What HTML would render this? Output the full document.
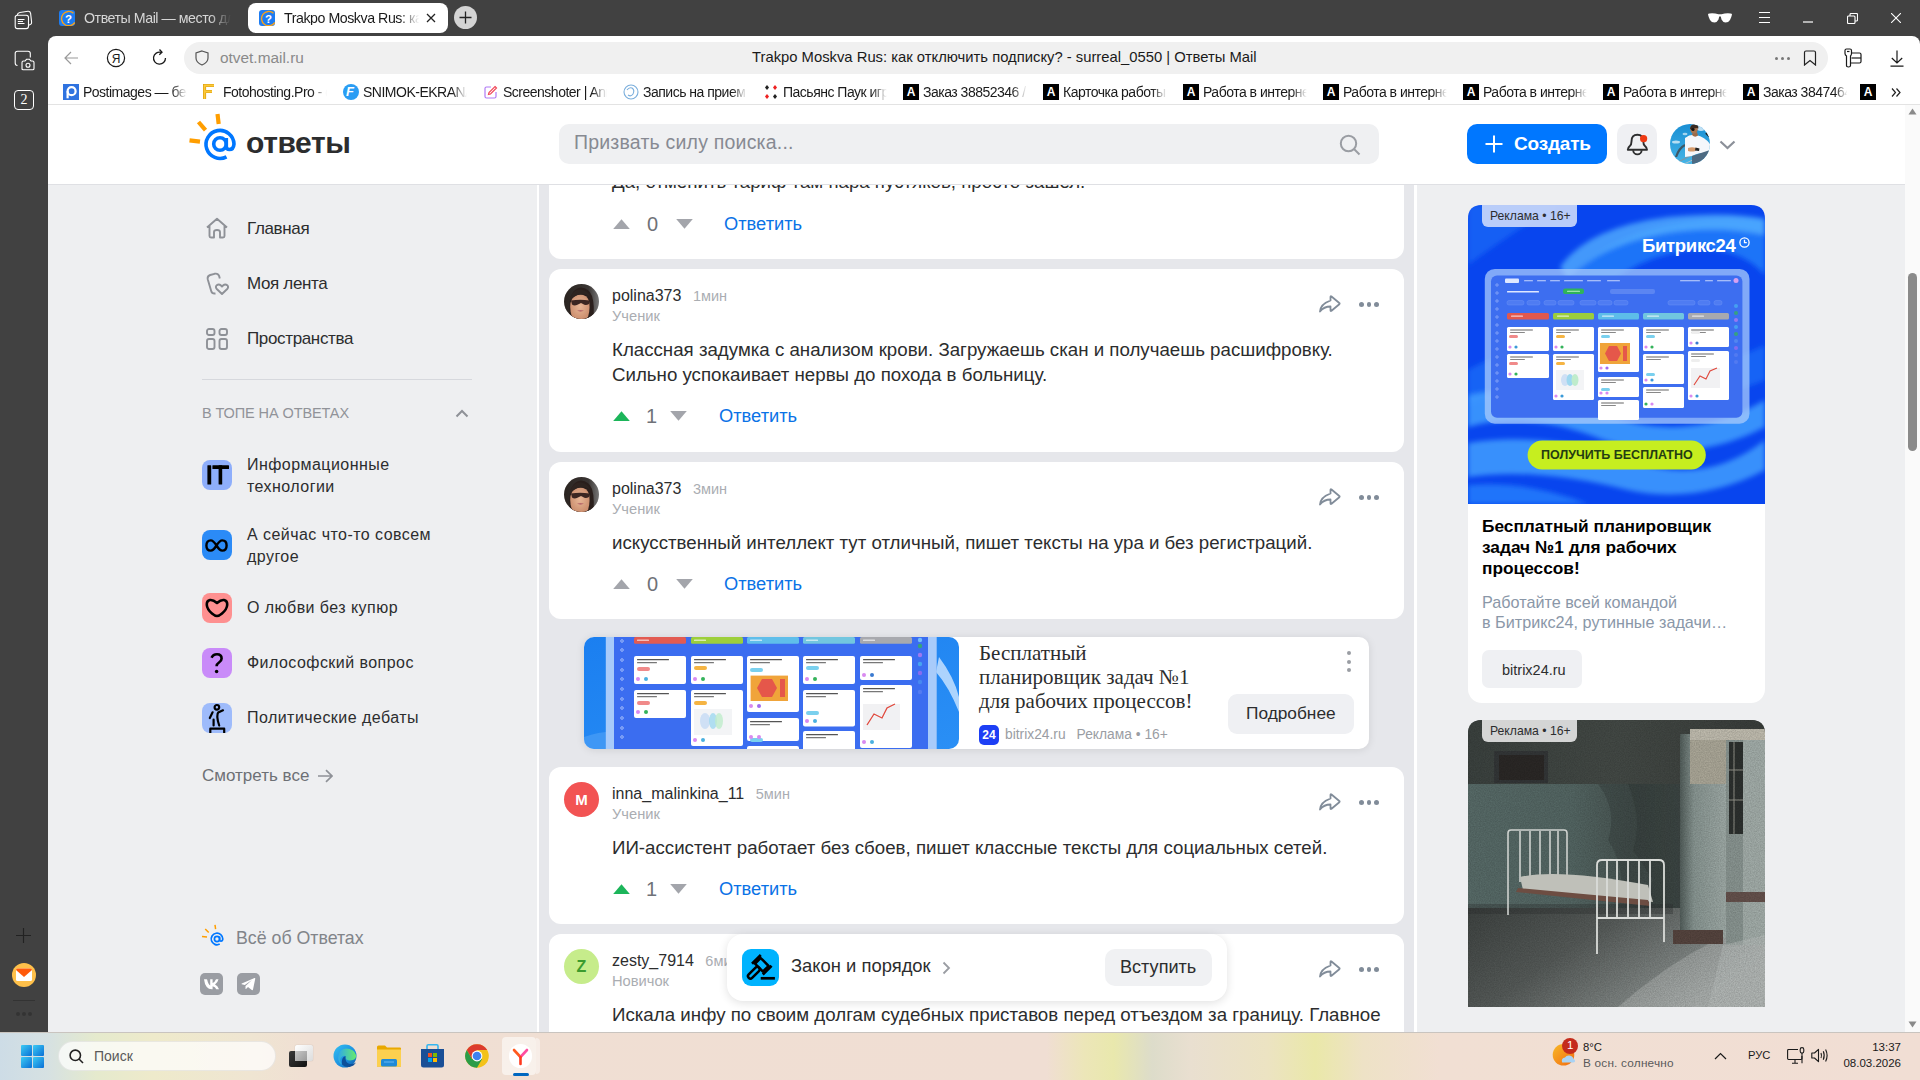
<!DOCTYPE html>
<html><head><meta charset="utf-8">
<style>
*{margin:0;padding:0;box-sizing:border-box}
html,body{width:1920px;height:1080px;overflow:hidden}
body{position:relative;background:#414141;font-family:"Liberation Sans",sans-serif;color:#2c2d2e}
.a{position:absolute}
.t{position:absolute;white-space:nowrap;line-height:1}
svg{display:block}
/* tabs */
.tabtxt{font-size:14.2px;color:#d6d6d6;letter-spacing:-0.45px}
.bm{position:absolute;top:83px;height:18px;font-size:14px;color:#1a1a1a;white-space:nowrap;line-height:18px;overflow:hidden;letter-spacing:-0.5px}
.bmA{position:absolute;top:84px;width:16px;height:16px;background:#000;color:#fff;font-weight:bold;font-size:12px;text-align:center;line-height:16px}
.fade{-webkit-mask-image:linear-gradient(90deg,#000 84%,transparent 98%)}
/* page */
.nav{font-size:17px;color:#2c2d2e;letter-spacing:-0.35px}
.topic{font-size:16px;color:#2c2d2e;line-height:22px;white-space:normal;letter-spacing:0.45px}
.ticon{position:absolute;left:202px;width:30px;height:30px;border-radius:8px}
.card{position:absolute;left:549px;width:855px;background:#fff;border-radius:12px}
.uname{font-size:16px;color:#2c2d2e}
.utime{font-size:14.5px;color:#aaadb2}
.urank{font-size:14.7px;color:#aaadb2}
.body{font-size:18.7px;color:#2c2d2e;line-height:24.5px}
.reply{font-size:18.3px;color:#0a72e6}
.cnt{font-size:20px;color:#6f7278}
</style></head><body>

<!-- ========== TAB STRIP ========== -->
<!-- sidebar icons -->
<svg class="a" style="left:14px;top:10px" width="20" height="20" viewBox="0 0 20 20" fill="none" stroke="#fff" stroke-width="1.1"><rect x="1.2" y="5.3" width="13.3" height="13.3" rx="2.3"/><path d="M3.2 5.2 Q3.6 2.8 5.8 2.5 L14 1.3 Q16.2 1.1 16.6 3.3 L17.6 12.2 Q17.8 14 16.3 14.6 L14.6 15.2"/><path d="M3.8 9.5H10.5M3.8 11.5H9M3.8 13.5H10.5"/></svg>
<svg class="a" style="left:14px;top:50px" width="21" height="21" viewBox="0 0 21 21" fill="none" stroke="#fff" stroke-width="1.1"><path d="M3.5 15.5 Q1.2 15.3 1.2 13 V3.5 Q1.2 1.2 3.5 1.2 H14 Q16.3 1.2 16.3 3.5 V7.5"/><path d="M8 19.5 V12.5 Q8 11 9.5 11 H11 L12.5 9.3 H15.5 L17 11 H18.5 Q20 11 20 12.5 V18.5 Q20 19.8 18.7 19.8 H9.3 Q8 19.8 8 18.5Z"/><circle cx="14" cy="15.2" r="2"/></svg>
<div class="a" style="left:14px;top:90px;width:20px;height:20px;border:1.1px solid #fff;border-radius:4px;color:#fff;font-size:14px;font-family:'Liberation Serif',serif;text-align:center;line-height:18px">2</div>
<svg class="a" style="left:16px;top:928px" width="15" height="15" viewBox="0 0 15 15" stroke="#222" stroke-width="1.1"><path d="M7.5 0v15M0 7.5h15"/></svg>
<div class="a" style="left:12px;top:963px;width:24px;height:24px;border-radius:12px;background:#fec04a"></div>
<svg class="a" style="left:15px;top:968px" width="18" height="14" viewBox="0 0 18 14"><path d="M1 2 Q1 0.5 2.5 0.5 H15.5 Q17 0.5 17 2 V11.5 Q17 13 15.5 13 H2.5 Q1 13 1 11.5Z" fill="#fff"/><path d="M1 2 Q1 0.5 2.5 0.5 H15.5 Q17 0.5 17 2 L9 9 Z" fill="#ff5a0a"/></svg>
<div class="a" style="left:13px;top:1000px;width:22px;height:1px;background:#333"></div>
<div class="a" style="left:16px;top:1012px;width:4px;height:4px;border-radius:2px;background:#333"></div>
<div class="a" style="left:22px;top:1012px;width:4px;height:4px;border-radius:2px;background:#333"></div>
<div class="a" style="left:28px;top:1012px;width:4px;height:4px;border-radius:2px;background:#333"></div>

<!-- tab 1 -->
<div class="a" style="left:59px;top:10px;width:16px;height:16px;border-radius:3px;background:#1d7cf2"></div>
<svg class="a" style="left:59px;top:10px" width="16" height="16" viewBox="0 0 16 16"><path d="M14.5 3.2 A7.2 7.2 0 1 0 15.8 12.5" fill="none" stroke="#f7a21b" stroke-width="1.4"/><text x="9.5" y="12.8" font-size="11.5" font-weight="bold" fill="#fff" text-anchor="middle" font-family="Liberation Sans">?</text></svg>
<div class="t tabtxt fade" style="left:84px;top:11px;width:150px;">Ответы Mail — место для</div>
<!-- tab 2 active -->
<div class="a" style="left:248px;top:3px;width:200px;height:30px;background:#fff;border-radius:8px"></div>
<div class="a" style="left:259px;top:10px;width:16px;height:16px;border-radius:3px;background:#1d7cf2"></div>
<svg class="a" style="left:259px;top:10px" width="16" height="16" viewBox="0 0 16 16"><path d="M14.5 3.2 A7.2 7.2 0 1 0 15.8 12.5" fill="none" stroke="#f7a21b" stroke-width="1.4"/><text x="9.5" y="12.8" font-size="11.5" font-weight="bold" fill="#fff" text-anchor="middle" font-family="Liberation Sans">?</text></svg>
<div class="t fade" style="left:284px;top:11px;width:138px;font-size:14.2px;letter-spacing:-0.45px;color:#1a1a1a;overflow:hidden">Trakpo Moskva Rus: как</div>
<svg class="a" style="left:426px;top:13px" width="10" height="10" viewBox="0 0 10 10" stroke="#222" stroke-width="1.3"><path d="M1 1L9 9M9 1L1 9"/></svg>
<div class="a" style="left:454px;top:6px;width:23px;height:23px;border-radius:12px;background:#d4d4d4"></div>
<svg class="a" style="left:459px;top:11px" width="13" height="13" viewBox="0 0 13 13" stroke="#222" stroke-width="1.3"><path d="M6.5 0.5v12M0.5 6.5h12"/></svg>

<!-- window controls -->
<svg class="a" style="left:1708px;top:13px" width="24" height="10" viewBox="0 0 24 10" fill="#fff"><path d="M0 1.5 Q0 0.5 1.5 0.5 Q6 0 10.5 1.2 H13.5 Q18 0 22.5 0.5 Q24 0.5 24 1.5 Q23.5 4 22 7 Q20.5 9.5 17.5 9.5 Q15 9.5 13.5 6.5 L12.8 3.5 H11.2 L10.5 6.5 Q9 9.5 6.5 9.5 Q3.5 9.5 2 7 Q0.5 4 0 1.5Z"/></svg>
<svg class="a" style="left:1759px;top:12px" width="11" height="11" viewBox="0 0 11 11" stroke="#fff" stroke-width="1"><path d="M0 0.5h11M0 5.5h11M0 10.5h11"/></svg>
<svg class="a" style="left:1803px;top:21px" width="10" height="2" viewBox="0 0 10 2" stroke="#fff" stroke-width="1.2"><path d="M0 1h10"/></svg>
<svg class="a" style="left:1847px;top:13px" width="11" height="11" viewBox="0 0 11 11" fill="none" stroke="#fff" stroke-width="1.1"><rect x="0.5" y="3" width="7.5" height="7.5" rx="1"/><path d="M3 3V1.5Q3 0.5 4 0.5H9.5Q10.5 0.5 10.5 1.5V7Q10.5 8 9.5 8H8"/></svg>
<svg class="a" style="left:1891px;top:13px" width="10" height="10" viewBox="0 0 10 10" stroke="#fff" stroke-width="1.1"><path d="M0 0L10 10M10 0L0 10"/></svg>

<!-- ========== BROWSER CHROME ========== -->
<div class="a" style="left:48px;top:36px;width:1872px;height:69px;background:#fff;border-radius:8px 8px 0 0;border-bottom:1px solid #e3e3e3"></div>
<svg class="a" style="left:64px;top:51px" width="15" height="14" viewBox="0 0 15 14" fill="none" stroke="#9a9a9a" stroke-width="1.2"><path d="M14 7H1M7 1L1 7L7 13"/></svg>
<svg class="a" style="left:106px;top:48px" width="20" height="20" viewBox="0 0 20 20" fill="none" stroke="#1a1a1a" stroke-width="1.2"><circle cx="10" cy="10" r="8.6"/><text x="10" y="14.5" font-size="12" fill="#1a1a1a" stroke="none" text-anchor="middle" font-family="Liberation Sans">Я</text></svg>
<svg class="a" style="left:152px;top:48px" width="16" height="18" viewBox="0 0 16 18" fill="none" stroke="#1a1a1a" stroke-width="1.3"><path d="M13.5 10 A6 6 0 1 1 9 4.3"/><path d="M7.5 1.5 L10 4.3 L7.3 6.8"/></svg>
<div class="a" style="left:184px;top:42px;width:1644px;height:32px;background:#f0f0f0;border-radius:16px"></div>
<svg class="a" style="left:195px;top:50px" width="14" height="16" viewBox="0 0 14 16" fill="none" stroke="#555" stroke-width="1.2"><path d="M7 1 L13 3 V8 Q13 12.5 7 15 Q1 12.5 1 8 V3Z"/></svg>
<div class="t" style="left:220px;top:50px;font-size:15.4px;color:#8a8a8a">otvet.mail.ru</div>
<div class="t" style="left:752px;top:50px;font-size:14.8px;color:#1a1a1a">Trakpo Moskva Rus: как отключить подписку? - surreal_0550 | Ответы Mail</div>
<div class="a" style="left:1775px;top:57px;width:3px;height:3px;border-radius:2px;background:#777"></div>
<div class="a" style="left:1781px;top:57px;width:3px;height:3px;border-radius:2px;background:#777"></div>
<div class="a" style="left:1787px;top:57px;width:3px;height:3px;border-radius:2px;background:#777"></div>
<svg class="a" style="left:1803px;top:50px" width="14" height="16" viewBox="0 0 14 16" fill="none" stroke="#222" stroke-width="1.2"><path d="M1.5 15V2.5Q1.5 1 3 1H11Q12.5 1 12.5 2.5V15L7 10.5Z"/></svg>
<svg class="a" style="left:1843px;top:48px" width="19" height="20" viewBox="0 0 19 20" fill="none" stroke="#1a1a1a" stroke-width="1.2"><path d="M2 2.5Q2 1 3.5 1H7Q8.5 1 8.5 2.5V5.5Q8.5 7 7.5 8V17.5Q7.5 19 5.5 19Q3.5 19 3.5 17.5V8Q2 7 2 5.5Z"/><path d="M4 3.5H6.5"/><path d="M8.5 5H16.5Q18 5 18 6.5V13.5Q18 15 16.5 15H7.5"/><path d="M8.5 10H18"/></svg>
<svg class="a" style="left:1890px;top:50px" width="14" height="17" viewBox="0 0 14 17" fill="none" stroke="#1a1a1a" stroke-width="1.2"><path d="M7 0.5V13M1.8 8L7 13L12.2 8M0.5 16.2H13.5"/></svg>

<!-- bookmarks -->
<div class="a" style="left:63px;top:84px;width:16px;height:16px;background:#2f73e0"></div>
<svg class="a" style="left:63px;top:84px" width="16" height="16" viewBox="0 0 16 16" fill="none" stroke="#fff" stroke-width="2.2"><circle cx="8.6" cy="7.2" r="4"/><path d="M4.6 7.2V14.3"/></svg>
<div class="bm fade" style="left:83px;width:106px">Postimages — бесплатный</div>
<svg class="a" style="left:203px;top:84px" width="12" height="16" viewBox="0 0 12 16"><path d="M1.5 15V1.5H11M1.5 7.5H9" fill="none" stroke="#d89b0a" stroke-width="3.2"/><path d="M1.5 15V1.5H11M1.5 7.5H9" fill="none" stroke="#fcc93a" stroke-width="1.8"/></svg>
<div class="bm fade" style="left:223px;width:106px">Fotohosting.Pro - фото</div>
<div class="a" style="left:343px;top:84px;width:16px;height:16px;border-radius:8px;background:#2a9df4"></div>
<div class="t" style="left:346px;top:85px;font-size:13px;color:#fff;font-style:italic;font-weight:bold">F</div>
<div class="bm fade" style="left:363px;width:106px">SNIMOK-EKRANA.ru</div>
<svg class="a" style="left:484px;top:85px" width="14" height="14" viewBox="0 0 14 14" fill="none" stroke-width="1.2"><path d="M7 2H2.5Q1 2 1 3.5V11.5Q1 13 2.5 13H10.5Q12 13 12 11.5V7" stroke="#b07af5"/><path d="M11 1.5L12.5 3L6.5 9L4.5 9.5L5 7.5Z" stroke="#f04a5a"/></svg>
<div class="bm fade" style="left:503px;width:106px">Screenshoter | Annotate</div>
<svg class="a" style="left:623px;top:84px" width="16" height="16" viewBox="0 0 16 16" fill="none" stroke="#7aaedc" stroke-width="1.1"><circle cx="8" cy="8" r="7"/><path d="M4 6Q6 3 9 4Q12 6 10 10Q8 13 5 11"/></svg>
<div class="bm fade" style="left:643px;width:106px">Запись на прием к врачу</div>
<svg class="a" style="left:763px;top:84px" width="16" height="16" viewBox="0 0 16 16"><path d="M4 1L6 3.5L4 6L2 3.5Z" fill="#222"/><path d="M12 1L14 3.5L12 6L10 3.5Z" fill="#e22"/><path d="M4 10L6 12.5L4 15L2 12.5Z" fill="#e22"/><path d="M12 10L14 12.5L12 15L10 12.5Z" fill="#222"/></svg>
<div class="bm fade" style="left:783px;width:106px">Пасьянс Паук играть</div>
<div class="bmA" style="left:903px">A</div><div class="bm fade" style="left:923px;width:106px">Заказ 38852346 / Заказ</div>
<div class="bmA" style="left:1043px">A</div><div class="bm fade" style="left:1063px;width:106px">Карточка работы</div>
<div class="bmA" style="left:1183px">A</div><div class="bm fade" style="left:1203px;width:106px">Работа в интернете</div>
<div class="bmA" style="left:1323px">A</div><div class="bm fade" style="left:1343px;width:106px">Работа в интернете</div>
<div class="bmA" style="left:1463px">A</div><div class="bm fade" style="left:1483px;width:106px">Работа в интернете</div>
<div class="bmA" style="left:1603px">A</div><div class="bm fade" style="left:1623px;width:106px">Работа в интернете</div>
<div class="bmA" style="left:1743px">A</div><div class="bm fade" style="left:1763px;width:86px;overflow:hidden">Заказ 38474646</div>
<div class="bmA" style="left:1860px">A</div>
<svg class="a" style="left:1891px;top:88px" width="10" height="9" viewBox="0 0 10 9" fill="none" stroke="#222" stroke-width="1.2"><path d="M1 0.5L4.5 4.5L1 8.5M5.5 0.5L9 4.5L5.5 8.5"/></svg>

<!-- ========== PAGE ========== -->
<div id="page" class="a" style="left:48px;top:105px;width:1857px;height:927px;background:#eeeff1;overflow:hidden"></div>
<!-- center column -->
<div class="a" style="left:537px;top:185px;width:880px;height:847px;background:#fff"></div>
<div class="a" style="left:539px;top:185px;width:875px;height:847px;background:#e6e7eb"></div>

<!-- CARDS -->
<div class="card" style="top:105px;height:154px;border-radius:0 0 12px 12px">
<div class="a body" style="left:63px;top:65px;width:780px">Да, отменить тариф там пара пустяков, просто зашел.</div>
<svg class="a" style="left:64px;top:114px" width="17" height="10" viewBox="0 0 17 10"><path d="M8.5 0.3 L16.8 10 H0.2Z" fill="#a3a5ab"/></svg>
<div class="t cnt" style="left:98px;top:108.5px">0</div>
<svg class="a" style="left:127px;top:114px" width="17" height="10" viewBox="0 0 17 10"><path d="M0.2 0 H16.8 L8.5 9.7Z" fill="#a3a5ab"/></svg>
<div class="t reply" style="left:175px;top:110px">Ответить</div>
</div><div class="card" style="top:269px;height:183px">
<svg class="a" style="left:15px;top:15px" width="35" height="35" viewBox="0 0 35 35"><defs><clipPath id="avc"><circle cx="17.5" cy="17.5" r="17.5"/></clipPath><radialGradient id="skin" cx="0.5" cy="0.45" r="0.6"><stop offset="0" stop-color="#e8b898"/><stop offset="1" stop-color="#c98a6a"/></radialGradient><linearGradient id="bgr" x1="0" y1="0" x2="1" y2="0"><stop offset="0" stop-color="#2a2420"/><stop offset="0.7" stop-color="#3a3533"/><stop offset="1" stop-color="#777"/></linearGradient></defs><g clip-path="url(#avc)"><rect width="35" height="35" fill="url(#bgr)"/><path d="M6 35 Q4 20 7 12 Q10 4 17 3.5 Q25 4 28 12 Q31 22 29 35Z" fill="#2a1f1c"/><path d="M8 33 Q5.5 26 6.5 19 Q8 11 16 10.5 Q23 10.5 25 17 Q26.5 25 24 33 Q19 37 12 35.5Z" fill="url(#skin)"/><path d="M6 14 Q9 5 17 5.5 Q24 6 27 14 Q23 9.5 17 10.5 Q10 11 6 17Z" fill="#2e2420"/><path d="M7 16.5 Q16 15 25.5 16.5 L25 20 Q21.5 22 19 20 L17 19 L15 20 Q11 22.5 8 20.5Z" fill="#3b2622"/><path d="M13 26.5 Q16.5 25.3 20 26.5 Q16.5 28.8 13 26.5Z" fill="#b86b6b"/></g></svg>
<div class="t" style="left:63px;top:19px"><span class="uname">polina373</span><span class="utime" style="margin-left:11.5px">1мин</span></div>
<div class="t urank" style="left:63px;top:40px">Ученик</div>
<svg class="a" style="left:770px;top:26px" width="22" height="18" viewBox="0 0 22 18" fill="none" stroke="#818c99" stroke-width="1.8" stroke-linejoin="round"><path d="M1 16.5 Q1.5 9 11.5 5.5 V2 Q11.5 0.8 12.5 1.5 L20.3 8 Q21 8.5 20.3 9.2 L12.5 15.8 Q11.5 16.5 11.5 15.3 V11.5 Q5 11.5 1 16.5Z"/></svg>
<div class="a" style="left:810px;top:33px;width:4.5px;height:4.5px;border-radius:3px;background:#818c99"></div>
<div class="a" style="left:817.5px;top:33px;width:4.5px;height:4.5px;border-radius:3px;background:#818c99"></div>
<div class="a" style="left:825px;top:33px;width:4.5px;height:4.5px;border-radius:3px;background:#818c99"></div>
<div class="a body" style="left:63px;top:69px;width:780px">Классная задумка с анализом крови. Загружаешь скан и получаешь расшифровку. Сильно успокаивает нервы до похода в больницу.</div>
<svg class="a" style="left:64px;top:142px" width="17" height="10" viewBox="0 0 17 10"><path d="M8.5 0.3 L16.8 10 H0.2Z" fill="#1cb55a"/></svg>
<div class="t cnt" style="left:97px;top:136.5px">1</div>
<svg class="a" style="left:121px;top:142px" width="17" height="10" viewBox="0 0 17 10"><path d="M0.2 0 H16.8 L8.5 9.7Z" fill="#a3a5ab"/></svg>
<div class="t reply" style="left:170px;top:138px">Ответить</div>

</div><div class="card" style="top:462px;height:157px">
<svg class="a" style="left:15px;top:15px" width="35" height="35" viewBox="0 0 35 35"><defs><clipPath id="avc"><circle cx="17.5" cy="17.5" r="17.5"/></clipPath><radialGradient id="skin" cx="0.5" cy="0.45" r="0.6"><stop offset="0" stop-color="#e8b898"/><stop offset="1" stop-color="#c98a6a"/></radialGradient><linearGradient id="bgr" x1="0" y1="0" x2="1" y2="0"><stop offset="0" stop-color="#2a2420"/><stop offset="0.7" stop-color="#3a3533"/><stop offset="1" stop-color="#777"/></linearGradient></defs><g clip-path="url(#avc)"><rect width="35" height="35" fill="url(#bgr)"/><path d="M6 35 Q4 20 7 12 Q10 4 17 3.5 Q25 4 28 12 Q31 22 29 35Z" fill="#2a1f1c"/><path d="M8 33 Q5.5 26 6.5 19 Q8 11 16 10.5 Q23 10.5 25 17 Q26.5 25 24 33 Q19 37 12 35.5Z" fill="url(#skin)"/><path d="M6 14 Q9 5 17 5.5 Q24 6 27 14 Q23 9.5 17 10.5 Q10 11 6 17Z" fill="#2e2420"/><path d="M7 16.5 Q16 15 25.5 16.5 L25 20 Q21.5 22 19 20 L17 19 L15 20 Q11 22.5 8 20.5Z" fill="#3b2622"/><path d="M13 26.5 Q16.5 25.3 20 26.5 Q16.5 28.8 13 26.5Z" fill="#b86b6b"/></g></svg>
<div class="t" style="left:63px;top:19px"><span class="uname">polina373</span><span class="utime" style="margin-left:11.5px">3мин</span></div>
<div class="t urank" style="left:63px;top:40px">Ученик</div>
<svg class="a" style="left:770px;top:26px" width="22" height="18" viewBox="0 0 22 18" fill="none" stroke="#818c99" stroke-width="1.8" stroke-linejoin="round"><path d="M1 16.5 Q1.5 9 11.5 5.5 V2 Q11.5 0.8 12.5 1.5 L20.3 8 Q21 8.5 20.3 9.2 L12.5 15.8 Q11.5 16.5 11.5 15.3 V11.5 Q5 11.5 1 16.5Z"/></svg>
<div class="a" style="left:810px;top:33px;width:4.5px;height:4.5px;border-radius:3px;background:#818c99"></div>
<div class="a" style="left:817.5px;top:33px;width:4.5px;height:4.5px;border-radius:3px;background:#818c99"></div>
<div class="a" style="left:825px;top:33px;width:4.5px;height:4.5px;border-radius:3px;background:#818c99"></div>
<div class="a body" style="left:63px;top:69px;width:780px">искусственный интеллект тут отличный, пишет тексты на ура и без регистраций.</div>
<svg class="a" style="left:64px;top:117px" width="17" height="10" viewBox="0 0 17 10"><path d="M8.5 0.3 L16.8 10 H0.2Z" fill="#a3a5ab"/></svg>
<div class="t cnt" style="left:98px;top:111.5px">0</div>
<svg class="a" style="left:127px;top:117px" width="17" height="10" viewBox="0 0 17 10"><path d="M0.2 0 H16.8 L8.5 9.7Z" fill="#a3a5ab"/></svg>
<div class="t reply" style="left:175px;top:113px">Ответить</div>

</div><div class="card" style="top:767px;height:157px">
<div class="a" style="left:15px;top:15px;width:35px;height:35px;border-radius:18px;background:#f25353;color:#fff;font-size:15px;font-weight:bold;text-align:center;line-height:35px">M</div>
<div class="t" style="left:63px;top:19px"><span class="uname">inna_malinkina_11</span><span class="utime" style="margin-left:11.5px">5мин</span></div>
<div class="t urank" style="left:63px;top:40px">Ученик</div>
<svg class="a" style="left:770px;top:26px" width="22" height="18" viewBox="0 0 22 18" fill="none" stroke="#818c99" stroke-width="1.8" stroke-linejoin="round"><path d="M1 16.5 Q1.5 9 11.5 5.5 V2 Q11.5 0.8 12.5 1.5 L20.3 8 Q21 8.5 20.3 9.2 L12.5 15.8 Q11.5 16.5 11.5 15.3 V11.5 Q5 11.5 1 16.5Z"/></svg>
<div class="a" style="left:810px;top:33px;width:4.5px;height:4.5px;border-radius:3px;background:#818c99"></div>
<div class="a" style="left:817.5px;top:33px;width:4.5px;height:4.5px;border-radius:3px;background:#818c99"></div>
<div class="a" style="left:825px;top:33px;width:4.5px;height:4.5px;border-radius:3px;background:#818c99"></div>
<div class="a body" style="left:63px;top:69px;width:780px">ИИ-ассистент работает без сбоев, пишет классные тексты для социальных сетей.</div>
<svg class="a" style="left:64px;top:117px" width="17" height="10" viewBox="0 0 17 10"><path d="M8.5 0.3 L16.8 10 H0.2Z" fill="#1cb55a"/></svg>
<div class="t cnt" style="left:97px;top:111.5px">1</div>
<svg class="a" style="left:121px;top:117px" width="17" height="10" viewBox="0 0 17 10"><path d="M0.2 0 H16.8 L8.5 9.7Z" fill="#a3a5ab"/></svg>
<div class="t reply" style="left:170px;top:113px">Ответить</div>

</div><div class="card" style="top:934px;height:157px">
<div class="a" style="left:15px;top:15px;width:35px;height:35px;border-radius:18px;background:#c6ec8b;color:#3c9b2e;font-size:16px;font-weight:bold;text-align:center;line-height:35px">Z</div>
<div class="t" style="left:63px;top:19px"><span class="uname">zesty_7914</span><span class="utime" style="margin-left:11.5px">6мин</span></div>
<div class="t urank" style="left:63px;top:40px">Новичок</div>
<svg class="a" style="left:770px;top:26px" width="22" height="18" viewBox="0 0 22 18" fill="none" stroke="#818c99" stroke-width="1.8" stroke-linejoin="round"><path d="M1 16.5 Q1.5 9 11.5 5.5 V2 Q11.5 0.8 12.5 1.5 L20.3 8 Q21 8.5 20.3 9.2 L12.5 15.8 Q11.5 16.5 11.5 15.3 V11.5 Q5 11.5 1 16.5Z"/></svg>
<div class="a" style="left:810px;top:33px;width:4.5px;height:4.5px;border-radius:3px;background:#818c99"></div>
<div class="a" style="left:817.5px;top:33px;width:4.5px;height:4.5px;border-radius:3px;background:#818c99"></div>
<div class="a" style="left:825px;top:33px;width:4.5px;height:4.5px;border-radius:3px;background:#818c99"></div>
<div class="a body" style="left:63px;top:69px;width:780px">Искала инфу по своим долгам судебных приставов перед отъездом за границу. Главное</div>
<svg class="a" style="left:64px;top:117px" width="17" height="10" viewBox="0 0 17 10"><path d="M8.5 0.3 L16.8 10 H0.2Z" fill="#a3a5ab"/></svg>
<div class="t cnt" style="left:97px;top:111.5px">1</div>
<svg class="a" style="left:121px;top:117px" width="17" height="10" viewBox="0 0 17 10"><path d="M0.2 0 H16.8 L8.5 9.7Z" fill="#a3a5ab"/></svg>
<div class="t reply" style="left:170px;top:113px">Ответить</div>

</div>

<div class="a" style="left:584px;top:637px;width:785px;height:112px;background:#fff;border-radius:10px;box-shadow:0 1px 8px rgba(0,0,0,0.10)"></div>
<svg class="a" style="left:584px;top:637px" width="375" height="112" viewBox="0 0 375 112"><defs><linearGradient id="bg1" x1="0" y1="0" x2="1" y2="1"><stop offset="0" stop-color="#1b7ff0"/><stop offset="1" stop-color="#2a8ff5"/></linearGradient><clipPath id="cp1"><rect x="0" y="0" width="375" height="112" rx="10"/></clipPath></defs><g clip-path="url(#cp1)"><rect x="0" y="0" width="375" height="112" fill="url(#bg1)"/><path d="M0 100 Q40 85 80 112 L0 112Z" fill="#5aa8f8" opacity="0.5"/><path d="M355 20 Q370 40 375 60 L375 75 Q365 50 352 35Z" fill="#cfe6ff" opacity="0.8"/><rect x="21.8" y="0.0" width="330.9" height="112.0" rx="0" fill="#a8cbfa" /><rect x="30.0" y="0.0" width="314.0" height="112.0" rx="0" fill="#3b6df0" /><circle cx="38" cy="4" r="1.3" fill="none" stroke="#b8cbfb" stroke-width="0.8"/><circle cx="38" cy="13" r="1.3" fill="none" stroke="#b8cbfb" stroke-width="0.8"/><circle cx="38" cy="23" r="1.3" fill="none" stroke="#b8cbfb" stroke-width="0.8"/><circle cx="38" cy="33" r="1.3" fill="none" stroke="#b8cbfb" stroke-width="0.8"/><circle cx="38" cy="42" r="1.3" fill="none" stroke="#b8cbfb" stroke-width="0.8"/><circle cx="38" cy="52" r="1.3" fill="none" stroke="#b8cbfb" stroke-width="0.8"/><circle cx="38" cy="62" r="1.3" fill="none" stroke="#b8cbfb" stroke-width="0.8"/><circle cx="38" cy="71" r="1.3" fill="none" stroke="#b8cbfb" stroke-width="0.8"/><circle cx="38" cy="81" r="1.3" fill="none" stroke="#b8cbfb" stroke-width="0.8"/><circle cx="38" cy="91" r="1.3" fill="none" stroke="#b8cbfb" stroke-width="0.8"/><circle cx="38" cy="100" r="1.3" fill="none" stroke="#b8cbfb" stroke-width="0.8"/><circle cx="336" cy="3" r="2.2" fill="#7fd0ff" opacity="0.8"/><circle cx="336" cy="9" r="2.2" fill="#34b35a" opacity="0.8"/><circle cx="336" cy="18" r="2.2" fill="#b57cf0" opacity="0.8"/><circle cx="336" cy="27" r="2.2" fill="#4ab0f0" opacity="0.8"/><circle cx="336" cy="36" r="2.2" fill="#9a6cf0" opacity="0.8"/><circle cx="336" cy="45" r="2.2" fill="#4a90f0" opacity="0.8"/><circle cx="336" cy="55" r="2.2" fill="#5a7ff0" opacity="0.8"/><rect x="50.0" y="0.0" width="52.0" height="6.8" rx="1.5" fill="#e25b52" /><rect x="53.0" y="2.5" width="12.0" height="1.5" rx="0.5" fill="#ffffff" opacity="0.6"/><rect x="107.0" y="0.0" width="52.0" height="6.8" rx="1.5" fill="#9dcf3b" /><rect x="110.0" y="2.5" width="12.0" height="1.5" rx="0.5" fill="#ffffff" opacity="0.6"/><rect x="163.0" y="0.0" width="52.0" height="6.8" rx="1.5" fill="#5fbeea" /><rect x="166.0" y="2.5" width="12.0" height="1.5" rx="0.5" fill="#ffffff" opacity="0.6"/><rect x="219.0" y="0.0" width="52.0" height="6.8" rx="1.5" fill="#72c6df" /><rect x="222.0" y="2.5" width="12.0" height="1.5" rx="0.5" fill="#ffffff" opacity="0.6"/><rect x="276.0" y="0.0" width="52.0" height="6.8" rx="1.5" fill="#a8a9ae" /><rect x="279.0" y="2.5" width="12.0" height="1.5" rx="0.5" fill="#ffffff" opacity="0.6"/><rect x="50.0" y="19.0" width="52.0" height="28.0" rx="2" fill="#ffffff" /><rect x="53.0" y="22.0" width="32.0" height="1.2" rx="0.5" fill="#555" /><rect x="53.0" y="25.0" width="20.0" height="1.2" rx="0.5" fill="#777" /><rect x="50.0" y="53.0" width="52.0" height="28.0" rx="2" fill="#ffffff" /><rect x="53.0" y="56.0" width="32.0" height="1.2" rx="0.5" fill="#555" /><rect x="53.0" y="59.0" width="20.0" height="1.2" rx="0.5" fill="#777" /><rect x="107.0" y="19.0" width="52.0" height="28.0" rx="2" fill="#ffffff" /><rect x="110.0" y="22.0" width="32.0" height="1.2" rx="0.5" fill="#555" /><rect x="110.0" y="25.0" width="20.0" height="1.2" rx="0.5" fill="#777" /><rect x="107.0" y="53.0" width="52.0" height="56.0" rx="2" fill="#ffffff" /><rect x="110.0" y="56.0" width="32.0" height="1.2" rx="0.5" fill="#555" /><rect x="110.0" y="59.0" width="20.0" height="1.2" rx="0.5" fill="#777" /><rect x="163.0" y="19.0" width="52.0" height="56.0" rx="2" fill="#ffffff" /><rect x="166.0" y="22.0" width="32.0" height="1.2" rx="0.5" fill="#555" /><rect x="166.0" y="25.0" width="20.0" height="1.2" rx="0.5" fill="#777" /><rect x="163.0" y="81.0" width="52.0" height="23.0" rx="2" fill="#ffffff" /><rect x="166.0" y="84.0" width="32.0" height="1.2" rx="0.5" fill="#555" /><rect x="166.0" y="87.0" width="20.0" height="1.2" rx="0.5" fill="#777" /><rect x="163.0" y="109.0" width="52.0" height="6.0" rx="2" fill="#ffffff" /><rect x="166.0" y="112.0" width="32.0" height="1.2" rx="0.5" fill="#555" /><rect x="219.0" y="19.0" width="52.0" height="28.0" rx="2" fill="#ffffff" /><rect x="222.0" y="22.0" width="32.0" height="1.2" rx="0.5" fill="#555" /><rect x="222.0" y="25.0" width="20.0" height="1.2" rx="0.5" fill="#777" /><rect x="219.0" y="53.0" width="52.0" height="36.5" rx="2" fill="#ffffff" /><rect x="222.0" y="56.0" width="32.0" height="1.2" rx="0.5" fill="#555" /><rect x="222.0" y="59.0" width="20.0" height="1.2" rx="0.5" fill="#777" /><rect x="219.0" y="94.0" width="52.0" height="21.0" rx="2" fill="#ffffff" /><rect x="222.0" y="97.0" width="32.0" height="1.2" rx="0.5" fill="#555" /><rect x="222.0" y="100.0" width="20.0" height="1.2" rx="0.5" fill="#777" /><rect x="276.0" y="19.0" width="52.0" height="24.0" rx="2" fill="#ffffff" /><rect x="279.0" y="22.0" width="32.0" height="1.2" rx="0.5" fill="#555" /><rect x="279.0" y="25.0" width="20.0" height="1.2" rx="0.5" fill="#777" /><rect x="276.0" y="48.0" width="52.0" height="63.0" rx="2" fill="#ffffff" /><rect x="279.0" y="51.0" width="32.0" height="1.2" rx="0.5" fill="#555" /><rect x="279.0" y="54.0" width="20.0" height="1.2" rx="0.5" fill="#777" /><rect x="53.0" y="30.0" width="13.0" height="4.0" rx="2" fill="#f08a8a" /><rect x="110.0" y="29.0" width="13.0" height="4.0" rx="2" fill="#f5b443" /><rect x="166.0" y="31.0" width="13.0" height="4.0" rx="2" fill="#7ad0ee" /><rect x="222.0" y="29.0" width="13.0" height="4.0" rx="2" fill="#7ad0ee" /><rect x="53.0" y="64.0" width="13.0" height="4.0" rx="2" fill="#f08a8a" /><rect x="110.0" y="64.0" width="13.0" height="4.0" rx="2" fill="#f5b443" /><rect x="222.0" y="74.0" width="13.0" height="4.0" rx="2" fill="#7ad0ee" /><rect x="166.0" y="101.0" width="13.0" height="4.0" rx="2" fill="#7ad0ee" /><circle cx="54" cy="42" r="2" fill="#d98af0"/><circle cx="62" cy="42" r="2" fill="#4ab0e0"/><circle cx="54" cy="75" r="2" fill="#d98af0"/><circle cx="62" cy="75" r="2" fill="#34b35a"/><circle cx="111" cy="42" r="2" fill="#d98af0"/><circle cx="119" cy="42" r="2" fill="#34b35a"/><circle cx="167" cy="69" r="2" fill="#d98af0"/><circle cx="175" cy="69" r="2" fill="#a06cf0"/><circle cx="223" cy="42" r="2" fill="#d98af0"/><circle cx="231" cy="42" r="2" fill="#34b35a"/><circle cx="280" cy="38" r="2" fill="#d98af0"/><circle cx="288" cy="38" r="2" fill="#3a7ad0"/><circle cx="111" cy="103" r="2" fill="#d98af0"/><circle cx="119" cy="103" r="2" fill="#4ab0e0"/><circle cx="167" cy="100" r="2" fill="#d98af0"/><circle cx="175" cy="100" r="2" fill="#d98af0"/><circle cx="223" cy="84" r="2" fill="#d98af0"/><circle cx="231" cy="84" r="2" fill="#4ab0e0"/><circle cx="280" cy="105" r="2" fill="#d98af0"/><circle cx="288" cy="105" r="2" fill="#4ab0e0"/><rect x="166.6" y="38.6" width="37.4" height="25.4" rx="0" fill="#f0a43a" /><path d="M173 51 L178 42 L188 42 L193 51 L188 60 L178 60Z" fill="#e5574a"/><rect x="196.0" y="42.0" width="5.0" height="18.0" rx="0" fill="#e5574a" /><rect x="110.0" y="72.0" width="38.0" height="26.0" rx="0" fill="#f3f4f6" /><ellipse cx="121" cy="84" rx="5" ry="8" fill="#cfe0f5"/><ellipse cx="129" cy="84" rx="4" ry="8" fill="#9fd8f0" opacity="0.8"/><ellipse cx="135" cy="84" rx="4" ry="8" fill="#bfeccc" opacity="0.8"/><rect x="279.0" y="67.0" width="37.0" height="26.0" rx="0" fill="#f1f1f3" /><path d="M283 88 L290 77 L298 81 L303 71 L311 67" fill="none" stroke="#e0483c" stroke-width="1.3"/></g></svg>
<div class="a" style="left:979px;top:641px;width:260px;font-family:'Liberation Serif',serif;font-size:21px;line-height:24px;color:#2c2d2e">Бесплатный<br>планировщик задач №1<br>для рабочих процессов!</div>
<div class="a" style="left:979px;top:725px;width:20px;height:20px;border-radius:5px;background:#1d3ff5;color:#fff;font-size:12px;font-weight:bold;text-align:center;line-height:20px">24</div>
<div class="t" style="left:1005px;top:728px;font-size:13.8px;color:#9a9da3">bitrix24.ru<span style="margin-left:11px">Реклама • 16+</span></div>
<div class="a" style="left:1228px;top:694px;width:126px;height:40px;border-radius:9px;background:#eff0f3"></div>
<div class="t" style="left:1246px;top:705px;font-size:17.3px;color:#2c2d2e">Подробнее</div>
<div class="a" style="left:1347px;top:651px;width:4px;height:4px;border-radius:2px;background:#9a9da3"></div>
<div class="a" style="left:1347px;top:659.5px;width:4px;height:4px;border-radius:2px;background:#9a9da3"></div>
<div class="a" style="left:1347px;top:668px;width:4px;height:4px;border-radius:2px;background:#9a9da3"></div>

<!-- header -->
<div class="a" style="left:48px;top:105px;width:1857px;height:80px;background:#fff;border-bottom:1px solid #dfe0e4"></div>
<!-- logo -->
<svg class="a" style="left:188px;top:112px" width="52" height="52" viewBox="0 0 52 52">
  <g stroke="#ff9e00" stroke-width="4.2" stroke-linecap="butt">
    <path d="M1.5 28.3 L12 29.6"/>
    <path d="M10.5 18 L17.5 26.2" transform="translate(0,-8)"/>
    <path d="M29.5 2 L30.7 12"/>
  </g>
  <g fill="none" stroke="#0077ff" stroke-width="3.6">
    <circle cx="32" cy="32" r="6.3"/>
    <path d="M38.3 26 V34.5 Q38.3 37.5 41.5 37.5 Q45.5 37.5 46 32 A14 14 0 1 0 38.5 44.8"/>
  </g>
</svg>
<div class="t" style="left:246px;top:128px;font-size:30px;font-weight:bold;color:#2c2d2e;letter-spacing:-0.4px">ответы</div>
<!-- search -->
<div class="a" style="left:559px;top:124px;width:820px;height:40px;background:#eff0f2;border-radius:10px"></div>
<div class="t" style="left:574px;top:133px;font-size:19.5px;color:#878a92;letter-spacing:0.2px">Призвать силу поиска...</div>
<svg class="a" style="left:1339px;top:134px" width="22" height="22" viewBox="0 0 22 22" fill="none" stroke="#9a9da3" stroke-width="2"><circle cx="9.5" cy="9.5" r="7.7"/><path d="M15 15L20.5 20.5"/></svg>
<!-- create -->
<div class="a" style="left:1467px;top:124px;width:140px;height:40px;background:#0077ff;border-radius:10px"></div>
<svg class="a" style="left:1485px;top:135px" width="18" height="18" viewBox="0 0 18 18" stroke="#fff" stroke-width="2"><path d="M9 0.5V17.5M0.5 9H17.5"/></svg>
<div class="t" style="left:1514px;top:134px;font-size:19px;font-weight:bold;color:#fff;letter-spacing:-0.2px">Создать</div>
<!-- bell -->
<div class="a" style="left:1617px;top:124px;width:40px;height:40px;background:#eff0f3;border-radius:10px"></div>
<svg class="a" style="left:1626px;top:133px" width="22" height="23" viewBox="0 0 22 23" fill="none" stroke="#2c2d2e" stroke-width="1.9" stroke-linejoin="round"><path d="M1.8 16.8 Q1.8 14.6 3.8 13 Q5.5 11.5 5.5 8.5 Q5.5 1.8 11.4 1.8 Q17.3 1.8 17.3 8.5 Q17.3 11.5 19 13 Q21 14.6 21 16.8Z"/><path d="M7.2 17.2 A4.2 4.2 0 0 0 15.6 17.2"/><circle cx="17.6" cy="5.7" r="3.6" fill="#ef3a14" stroke="none"/></svg>
<!-- avatar -->
<svg class="a" style="left:1670px;top:124px" width="40" height="40" viewBox="0 0 40 40"><defs><clipPath id="hav"><circle cx="20" cy="20" r="20"/></clipPath><linearGradient id="sky" x1="0" y1="0" x2="0" y2="1"><stop offset="0" stop-color="#1a8fd4"/><stop offset="1" stop-color="#45b4e6"/></linearGradient></defs><g clip-path="url(#hav)">
<rect width="40" height="40" fill="url(#sky)"/>
<ellipse cx="6" cy="18" rx="4" ry="1.5" fill="#d8eef8" opacity="0.8"/><ellipse cx="15" cy="10" rx="2.5" ry="1.2" fill="#d8eef8" opacity="0.7"/><ellipse cx="31" cy="4" rx="5" ry="3" fill="#e6f3fb" opacity="0.8"/>
<path d="M6 33 Q9 24 15 21" fill="none" stroke="#3e5866" stroke-width="2.2"/>
<path d="M8 38 L40 22" stroke="#7b97a6" stroke-width="1.3"/>
<path d="M14 40 L40 28" stroke="#a9c0cc" stroke-width="1"/>
<path d="M15 14 Q20 10 26 11 Q35 13 40 20 V29 Q30 28 22 32 L15 33Z" fill="#f5f7fb"/>
<path d="M22 32 L40 26 V38 L28 40 H22Z" fill="#4d6a82"/>
<path d="M36 34 L40 32 V40 H31Z" fill="#e9ebee"/>
<path d="M18 24 Q22 22.5 26 24 L25.5 27 Q21.5 28 18 27Z" fill="#d49a6c"/>
<path d="M25.5 23.5 L29.5 24.5 L29 27 L25 26.5Z" fill="#222"/>
<path d="M22 11 Q25 14 28 11.5 L27 8 Q24 9.5 22.5 9Z" fill="#9c6a48"/>
<ellipse cx="24" cy="5" rx="3.8" ry="4.5" fill="#a8744e"/>
<path d="M20 4.5 Q21 0 25 0.3 Q29 0.8 28.3 4.5 Q26 2.8 21.5 6Z" fill="#3a2a20"/>
<circle cx="23" cy="5.5" r="1.6" fill="#111"/>
<path d="M36 9 L41 14" stroke="#222" stroke-width="2.2"/>
</g></svg>
<svg class="a" style="left:1719px;top:140px" width="17" height="10" viewBox="0 0 17 10" fill="none" stroke="#8b9099" stroke-width="2.2"><path d="M1.5 1.5L8.5 8L15.5 1.5"/></svg>


<!-- left nav -->
<svg class="a" style="left:205px;top:217px" width="24" height="22" viewBox="0 0 24 22" fill="none" stroke="#8e9197" stroke-width="1.9" stroke-linejoin="round"><path d="M2 10.5 L12 1.8 L22 10.5 M4.5 8.5 V19 Q4.5 20.5 6 20.5 H9 V15 Q9 13 12 13 Q15 13 15 15 V20.5 H18 Q19.5 20.5 19.5 19 V8.5"/></svg>
<div class="t nav" style="left:247px;top:220px">Главная</div>
<svg class="a" style="left:206px;top:272px" width="24" height="24" viewBox="0 0 24 24" fill="none" stroke="#8e9197" stroke-width="1.9" stroke-linejoin="round"><path d="M9.5 21.5 Q6 22 5.2 19 L1.8 7.5 Q1 4 4.2 3 L8.5 1.8 Q12 1 13.2 4.2 L13.8 6.5"/><path d="M16 22 L10.8 17 Q9 15 10.8 13.2 Q12.8 11.5 15 13.5 L16 14.5 L17 13.5 Q19.2 11.5 21.2 13.2 Q23 15 21.2 17Z"/></svg>
<div class="t nav" style="left:247px;top:275px">Моя лента</div>
<svg class="a" style="left:206px;top:328px" width="22" height="22" viewBox="0 0 22 22" fill="none" stroke="#8e9197" stroke-width="1.9"><rect x="1" y="1" width="7.5" height="6" rx="2"/><rect x="13.5" y="1" width="7.5" height="6" rx="2"/><rect x="1" y="11" width="7.5" height="10" rx="2"/><rect x="13.5" y="11" width="7.5" height="10" rx="2"/></svg>
<div class="t nav" style="left:247px;top:330px">Пространства</div>
<div class="a" style="left:202px;top:379px;width:270px;height:1px;background:#d6d8dd"></div>
<div class="t" style="left:202px;top:406px;font-size:14.5px;color:#919399;letter-spacing:-0.1px">В ТОПЕ НА ОТВЕТАХ</div>
<svg class="a" style="left:455px;top:409px" width="14" height="9" viewBox="0 0 14 9" fill="none" stroke="#8e9197" stroke-width="2"><path d="M1.5 7.5L7 2L12.5 7.5"/></svg>

<div class="ticon" style="top:460px;background:#8eaefb"></div>
<svg class="a" style="left:202px;top:460px" width="30" height="30" viewBox="0 0 30 30" fill="#000"><rect x="5.4" y="5.2" width="3.8" height="19.2" rx="0.5"/><rect x="10.4" y="5.2" width="16.6" height="3.8" rx="0.5"/><rect x="16.6" y="5.2" width="3.6" height="19.2" rx="0.5"/></svg>
<div class="a topic" style="left:247px;top:453.5px;width:215px">Информационные технологии</div>

<div class="ticon" style="top:530px;background:#2b8bf7"></div>
<svg class="a" style="left:205px;top:539px" width="23" height="13" viewBox="0 0 23 13" fill="none" stroke="#000" stroke-width="2.4"><path d="M11.5 6.5 Q8.3 1.4 5.8 1.4 Q1.4 1.4 1.4 6.5 Q1.4 11.6 5.8 11.6 Q8.3 11.6 11.5 6.5 Q14.7 1.4 17.2 1.4 Q21.6 1.4 21.6 6.5 Q21.6 11.6 17.2 11.6 Q14.7 11.6 11.5 6.5Z"/></svg>
<div class="a topic" style="left:247px;top:523.5px;width:215px">А сейчас что-то совсем другое</div>

<div class="ticon" style="top:593px;background:#fe9090"></div>
<svg class="a" style="left:205px;top:598px" width="24" height="20" viewBox="0 0 24 20" fill="none" stroke="#000" stroke-width="2.6" stroke-linejoin="round"><path d="M12 5 Q8 1.5 5 2 Q1.5 2.8 1.8 7 Q2.2 11.5 7 15.5 Q10 18 12 18 Q14 18 17 15.5 Q21.8 11.5 22.2 7 Q22.5 2.8 19 2 Q16 1.5 12 5Z"/></svg>
<div class="t topic" style="left:247px;top:597px">О любви без купюр</div>

<div class="ticon" style="top:648px;background:#c98bf9"></div>
<svg class="a" style="left:202px;top:648px" width="30" height="30" viewBox="0 0 30 30"><path d="M9.6 9.8 Q11 6.2 15 6.2 Q19.6 6.2 19.6 10.4 Q19.6 12.8 17 14.5 Q14.6 16 14.6 18.3" fill="none" stroke="#000" stroke-width="2.6"/><circle cx="14.6" cy="23.5" r="1.75" fill="#000"/></svg>
<div class="t topic" style="left:247px;top:652px">Философский вопрос</div>

<div class="ticon" style="top:703px;background:#9ebbfb"></div>
<svg class="a" style="left:202px;top:703px" width="30" height="30" viewBox="0 0 30 30" fill="none" stroke="#000" stroke-width="2.2" stroke-linecap="round" stroke-linejoin="round"><circle cx="14.9" cy="4.3" r="2.3"/><path d="M21 7.3 L16.2 9.6 Q15.4 10.5 15.3 14 Q15.6 18 17.2 22.5"/><path d="M10.6 9.3 L7.8 15"/><path d="M11.6 16.7 V22.5"/><path d="M8.3 29.5 V25.7 H22.2 V29.5"/></svg>
<div class="t topic" style="left:247px;top:707px">Политические дебаты</div>

<div class="t" style="left:202px;top:767px;font-size:17px;color:#6d7075">Смотреть все</div>
<svg class="a" style="left:317px;top:769px" width="16" height="14" viewBox="0 0 16 14" fill="none" stroke="#8e9197" stroke-width="1.7"><path d="M1 7H15M9 1.2L15 7L9 12.8"/></svg>

<svg class="a" style="left:200px;top:923px" width="26" height="26" viewBox="0 0 26 26"><g stroke="#ff9e00" stroke-width="1.5"><path d="M2 13.5 L7 14"/><path d="M5.2 6 L8.7 9.5"/><path d="M15 1.8 L15.6 6.2"/></g><g fill="none" stroke="#0077ff" stroke-width="1.7"><circle cx="17" cy="16" r="2.6"/><path d="M19.6 13.6 V16.8 Q19.6 18.2 21 18.2 Q22.6 18.2 22.8 16 A5.8 5.8 0 1 0 19.7 21.1"/></g></svg>
<div class="t" style="left:236px;top:929.5px;font-size:17.75px;color:#818489">Всё об Ответах</div>
<div class="a" style="left:200px;top:973px;width:23px;height:22px;border-radius:5px;background:#9a9da3"></div>
<svg class="a" style="left:203px;top:978px" width="17" height="12" viewBox="0 0 17 12"><path d="M1 1.2 H3.6 Q4 1.2 4.1 1.6 Q5.3 6.5 7.2 7.6 V1.2 H9.6 V5 Q11.6 4.6 13 1.2 H15.5 Q14.6 4.8 12 6.6 Q14.7 8 16 11.2 H13.3 Q12.2 8.6 9.6 8.2 V11.2 H9 Q2.2 11.2 1 1.2Z" fill="#fff"/></svg>
<div class="a" style="left:237px;top:973px;width:23px;height:22px;border-radius:5px;background:#9a9da3"></div>
<svg class="a" style="left:241px;top:977px" width="15" height="14" viewBox="0 0 15 14"><path d="M0.8 6.5 L13.5 1 Q14.5 0.7 14.2 2 L12 12.5 Q11.7 13.5 10.8 13 L7 10 L5 12 Q4.5 12.3 4.5 11.5 V9 L11 3 L3.8 8 L0.8 7.3 Q0 7 0.8 6.5Z" fill="#fff"/></svg>


<!-- right ads -->
<svg class="a" style="left:1468px;top:205px" width="297" height="299" viewBox="0 0 297 299"><defs>
<linearGradient id="rb" x1="0" y1="0" x2="0.3" y2="1"><stop offset="0" stop-color="#0a4ff5"/><stop offset="0.45" stop-color="#0862f7"/><stop offset="1" stop-color="#0a5cf2"/></linearGradient>
<radialGradient id="sw1" cx="0.7" cy="0.25" r="0.6"><stop offset="0" stop-color="#2d9bff" stop-opacity="0.9"/><stop offset="1" stop-color="#2d9bff" stop-opacity="0"/></radialGradient>
<clipPath id="cp2"><path d="M0 14 Q0 0 14 0 H283 Q297 0 297 14 V299 H0Z"/></clipPath>
</defs><g clip-path="url(#cp2)"><rect width="297" height="299" fill="#0845ee"/>
<filter id="bl1" x="-10%" y="-10%" width="120%" height="120%"><feGaussianBlur stdDeviation="2.5"/></filter><g filter="url(#bl1)"><path d="M0 0 H90 Q40 30 0 60Z" fill="#1a6ff8" opacity="0.6"/>
<path d="M80 110 Q110 40 200 20 Q260 8 297 14 V70 Q270 40 220 45 Q150 55 115 110Z" fill="#1f7dfa" opacity="0.85"/>
<path d="M92 62 Q120 22 200 12 Q260 6 297 14 V30 Q250 20 200 28 Q130 40 100 75Z" fill="#57b4ff" opacity="0.75"/>
<path d="M0 165 Q60 130 150 150 Q240 170 297 140 V175 Q240 200 150 185 Q60 170 0 200Z" fill="#1a70f8" opacity="0.7"/>
<path d="M0 190 Q70 175 140 210 Q220 240 297 195 V222 Q220 262 135 235 Q60 205 0 222Z" fill="#3f9dff" opacity="0.85"/>
<path d="M0 238 Q80 225 170 258 Q240 280 297 235 V265 Q230 300 160 285 Q70 262 0 272Z" fill="#46a4ff" opacity="0.8"/>
<path d="M0 280 Q60 275 120 299 H0Z" fill="#2a88ff" opacity="0.7"/>
</g><rect x="16.8" y="63.9" width="264.7" height="154.9" rx="10" fill="#a9cbfb" opacity="0.75"/><rect x="23.0" y="70.6" width="251.4" height="142.1" rx="6" fill="#3d6ef0" /><rect x="37.0" y="73.5" width="14.0" height="4.5" rx="1" fill="#dfe8ff" /><rect x="56.0" y="75.3" width="9.0" height="1.0" rx="0.5" fill="#c8d6fb" /><rect x="69.0" y="75.3" width="9.0" height="1.0" rx="0.5" fill="#c8d6fb" /><rect x="82.0" y="75.3" width="10.0" height="1.0" rx="0.5" fill="#c8d6fb" /><rect x="96.0" y="75.3" width="19.0" height="1.0" rx="0.5" fill="#c8d6fb" /><rect x="119.0" y="75.3" width="14.0" height="1.0" rx="0.5" fill="#c8d6fb" /><rect x="139.0" y="75.3" width="13.0" height="1.0" rx="0.5" fill="#c8d6fb" /><rect x="212.0" y="75.3" width="20.0" height="1.0" rx="0.5" fill="#c8d6fb" /><rect x="237.0" y="75.3" width="8.0" height="1.0" rx="0.5" fill="#c8d6fb" /><rect x="249.0" y="75.3" width="14.0" height="1.0" rx="0.5" fill="#c8d6fb" /><circle cx="268" cy="75.5" r="2.5" fill="#d7a0f0"/><rect x="39.0" y="86.0" width="32.0" height="1.5" rx="0.5" fill="#dfe8ff" /><rect x="95.0" y="83.5" width="21.0" height="5.5" rx="2" fill="#2fb45a" /><rect x="99.0" y="85.8" width="13.0" height="1.0" rx="0.5" fill="#bff0cc" /><rect x="142.0" y="84.0" width="45.0" height="5.0" rx="2" fill="#5b85f2" /><rect x="39.0" y="95.5" width="17.0" height="4.5" rx="2" fill="#4f7cf2" stroke="#6a90f4" stroke-width="0.5"/><rect x="59.0" y="95.5" width="13.0" height="4.5" rx="2" fill="#4f7cf2" stroke="#6a90f4" stroke-width="0.5"/><rect x="76.0" y="95.5" width="12.0" height="4.5" rx="2" fill="#4f7cf2" stroke="#6a90f4" stroke-width="0.5"/><rect x="90.0" y="95.5" width="16.0" height="4.5" rx="2" fill="#4f7cf2" stroke="#6a90f4" stroke-width="0.5"/><rect x="112.0" y="95.5" width="16.0" height="4.5" rx="2" fill="#4f7cf2" stroke="#6a90f4" stroke-width="0.5"/><rect x="130.0" y="95.5" width="14.0" height="4.5" rx="2" fill="#4f7cf2" stroke="#6a90f4" stroke-width="0.5"/><rect x="146.0" y="95.5" width="14.0" height="4.5" rx="2" fill="#4f7cf2" stroke="#6a90f4" stroke-width="0.5"/><rect x="200.0" y="95.5" width="27.0" height="4.5" rx="2" fill="#4f7cf2" stroke="#6a90f4" stroke-width="0.5"/><rect x="230.0" y="95.5" width="12.0" height="4.5" rx="2" fill="#4f7cf2" stroke="#6a90f4" stroke-width="0.5"/><rect x="246.0" y="95.5" width="8.0" height="4.5" rx="2" fill="#4f7cf2" stroke="#6a90f4" stroke-width="0.5"/><rect x="39.0" y="108.0" width="42.0" height="6.5" rx="1.5" fill="#e0584e" /><rect x="43.0" y="110.6" width="12.0" height="1.2" rx="0.5" fill="#fff" opacity="0.7"/><rect x="85.0" y="108.0" width="41.0" height="6.5" rx="1.5" fill="#9ccd3c" /><rect x="89.0" y="110.6" width="12.0" height="1.2" rx="0.5" fill="#fff" opacity="0.7"/><rect x="130.0" y="108.0" width="41.0" height="6.5" rx="1.5" fill="#5dbde9" /><rect x="134.0" y="110.6" width="12.0" height="1.2" rx="0.5" fill="#fff" opacity="0.7"/><rect x="175.0" y="108.0" width="41.0" height="6.5" rx="1.5" fill="#71c6df" /><rect x="179.0" y="110.6" width="12.0" height="1.2" rx="0.5" fill="#fff" opacity="0.7"/><rect x="220.0" y="108.0" width="41.0" height="6.5" rx="1.5" fill="#a8a9ae" /><rect x="224.0" y="110.6" width="12.0" height="1.2" rx="0.5" fill="#fff" opacity="0.7"/><rect x="39.0" y="122.0" width="42.0" height="24.0" rx="1.5" fill="#fff" /><rect x="42.0" y="124.5" width="23.0" height="1.0" rx="0.4" fill="#666" /><rect x="42.0" y="127.0" width="15.0" height="1.0" rx="0.4" fill="#888" /><rect x="39.0" y="149.0" width="42.0" height="24.0" rx="1.5" fill="#fff" /><rect x="42.0" y="151.5" width="23.0" height="1.0" rx="0.4" fill="#666" /><rect x="42.0" y="154.0" width="15.0" height="1.0" rx="0.4" fill="#888" /><rect x="85.0" y="122.0" width="41.0" height="24.0" rx="1.5" fill="#fff" /><rect x="88.0" y="124.5" width="23.0" height="1.0" rx="0.4" fill="#666" /><rect x="88.0" y="127.0" width="15.0" height="1.0" rx="0.4" fill="#888" /><rect x="85.0" y="149.0" width="41.0" height="46.0" rx="1.5" fill="#fff" /><rect x="88.0" y="151.5" width="23.0" height="1.0" rx="0.4" fill="#666" /><rect x="88.0" y="154.0" width="15.0" height="1.0" rx="0.4" fill="#888" /><rect x="130.0" y="122.0" width="41.0" height="45.0" rx="1.5" fill="#fff" /><rect x="133.0" y="124.5" width="23.0" height="1.0" rx="0.4" fill="#666" /><rect x="133.0" y="127.0" width="15.0" height="1.0" rx="0.4" fill="#888" /><rect x="130.0" y="172.0" width="41.0" height="20.0" rx="1.5" fill="#fff" /><rect x="133.0" y="174.5" width="23.0" height="1.0" rx="0.4" fill="#666" /><rect x="133.0" y="177.0" width="15.0" height="1.0" rx="0.4" fill="#888" /><rect x="130.0" y="195.0" width="41.0" height="20.0" rx="1.5" fill="#fff" /><rect x="133.0" y="197.5" width="23.0" height="1.0" rx="0.4" fill="#666" /><rect x="133.0" y="200.0" width="15.0" height="1.0" rx="0.4" fill="#888" /><rect x="175.0" y="122.0" width="41.0" height="24.0" rx="1.5" fill="#fff" /><rect x="178.0" y="124.5" width="23.0" height="1.0" rx="0.4" fill="#666" /><rect x="178.0" y="127.0" width="15.0" height="1.0" rx="0.4" fill="#888" /><rect x="175.0" y="149.0" width="41.0" height="30.0" rx="1.5" fill="#fff" /><rect x="178.0" y="151.5" width="23.0" height="1.0" rx="0.4" fill="#666" /><rect x="178.0" y="154.0" width="15.0" height="1.0" rx="0.4" fill="#888" /><rect x="175.0" y="182.0" width="41.0" height="21.0" rx="1.5" fill="#fff" /><rect x="178.0" y="184.5" width="23.0" height="1.0" rx="0.4" fill="#666" /><rect x="178.0" y="187.0" width="15.0" height="1.0" rx="0.4" fill="#888" /><rect x="220.0" y="122.0" width="41.0" height="20.0" rx="1.5" fill="#fff" /><rect x="223.0" y="124.5" width="23.0" height="1.0" rx="0.4" fill="#666" /><rect x="223.0" y="127.0" width="15.0" height="1.0" rx="0.4" fill="#888" /><rect x="220.0" y="146.0" width="41.0" height="49.0" rx="1.5" fill="#fff" /><rect x="223.0" y="148.5" width="23.0" height="1.0" rx="0.4" fill="#666" /><rect x="223.0" y="151.0" width="15.0" height="1.0" rx="0.4" fill="#888" /><rect x="41.0" y="130.0" width="9.0" height="3.0" rx="1.5" fill="#f08a8a" /><rect x="88.0" y="130.0" width="9.0" height="3.0" rx="1.5" fill="#f5b443" /><rect x="133.0" y="130.0" width="9.0" height="3.0" rx="1.5" fill="#7ad0ee" /><rect x="178.0" y="130.0" width="9.0" height="3.0" rx="1.5" fill="#7ad0ee" /><rect x="41.0" y="157.0" width="9.0" height="3.0" rx="1.5" fill="#f08a8a" /><rect x="88.0" y="157.0" width="9.0" height="3.0" rx="1.5" fill="#f5b443" /><rect x="178.0" y="168.0" width="9.0" height="3.0" rx="1.5" fill="#7ad0ee" /><rect x="133.0" y="183.0" width="9.0" height="3.0" rx="1.5" fill="#7ad0ee" /><rect x="223.0" y="126.0" width="9.0" height="3.0" rx="1.5" fill="#eee" /><rect x="223.0" y="154.0" width="9.0" height="3.0" rx="1.5" fill="#eee" /><circle cx="42" cy="142" r="1.6" fill="#d98af0"/><circle cx="48" cy="142" r="1.6" fill="#3a9ad8"/><circle cx="42" cy="169" r="1.6" fill="#d98af0"/><circle cx="48" cy="169" r="1.6" fill="#34b35a"/><circle cx="88" cy="142" r="1.6" fill="#d98af0"/><circle cx="94" cy="142" r="1.6" fill="#34b35a"/><circle cx="133" cy="163" r="1.6" fill="#d98af0"/><circle cx="139" cy="163" r="1.6" fill="#a06cf0"/><circle cx="178" cy="142" r="1.6" fill="#d98af0"/><circle cx="184" cy="142" r="1.6" fill="#34b35a"/><circle cx="223" cy="138" r="1.6" fill="#d98af0"/><circle cx="229" cy="138" r="1.6" fill="#3a7ad0"/><circle cx="88" cy="191" r="1.6" fill="#d98af0"/><circle cx="94" cy="191" r="1.6" fill="#3a9ad8"/><circle cx="178" cy="175" r="1.6" fill="#d98af0"/><circle cx="184" cy="175" r="1.6" fill="#3a9ad8"/><circle cx="178" cy="199" r="1.6" fill="#34b35a"/><circle cx="184" cy="199" r="1.6" fill="#d98af0"/><circle cx="223" cy="191" r="1.6" fill="#d98af0"/><circle cx="229" cy="191" r="1.6" fill="#3a9ad8"/><circle cx="133" cy="188" r="1.6" fill="#d98af0"/><circle cx="139" cy="188" r="1.6" fill="#d98af0"/><rect x="132.0" y="138.0" width="30.0" height="21.0" rx="0" fill="#f0a43a" /><path d="M137 148.5 L141 141 L149 141 L153 148.5 L149 156 L141 156Z" fill="#e5574a"/><rect x="155.0" y="141.0" width="4.0" height="15.0" rx="0" fill="#e5574a" /><rect x="88.0" y="165.0" width="28.0" height="20.0" rx="0" fill="#f3f4f6" /><ellipse cx="97" cy="175" rx="4" ry="6" fill="#cfe0f5"/><ellipse cx="102" cy="175" rx="3.5" ry="6" fill="#9fd8f0"/><ellipse cx="107" cy="175" rx="3.5" ry="6" fill="#bfeccc"/><rect x="223.0" y="163.0" width="29.0" height="20.0" rx="0" fill="#f1f1f3" /><path d="M226 180 L232 171 L238 174 L242 166 L249 163" fill="none" stroke="#e0483c" stroke-width="1.1"/><circle cx="29" cy="80" r="1.2" fill="none" stroke="#a9c0fb" stroke-width="0.6"/><circle cx="29" cy="88" r="1.2" fill="none" stroke="#a9c0fb" stroke-width="0.6"/><circle cx="29" cy="96" r="1.2" fill="none" stroke="#a9c0fb" stroke-width="0.6"/><circle cx="29" cy="104" r="1.2" fill="none" stroke="#a9c0fb" stroke-width="0.6"/><circle cx="29" cy="112" r="1.2" fill="none" stroke="#a9c0fb" stroke-width="0.6"/><circle cx="29" cy="120" r="1.2" fill="none" stroke="#a9c0fb" stroke-width="0.6"/><circle cx="29" cy="128" r="1.2" fill="none" stroke="#a9c0fb" stroke-width="0.6"/><circle cx="29" cy="136" r="1.2" fill="none" stroke="#a9c0fb" stroke-width="0.6"/><circle cx="29" cy="144" r="1.2" fill="none" stroke="#a9c0fb" stroke-width="0.6"/><circle cx="29" cy="152" r="1.2" fill="none" stroke="#a9c0fb" stroke-width="0.6"/><circle cx="29" cy="160" r="1.2" fill="none" stroke="#a9c0fb" stroke-width="0.6"/><circle cx="29" cy="168" r="1.2" fill="none" stroke="#a9c0fb" stroke-width="0.6"/><circle cx="29" cy="176" r="1.2" fill="none" stroke="#a9c0fb" stroke-width="0.6"/><circle cx="29" cy="184" r="1.2" fill="none" stroke="#a9c0fb" stroke-width="0.6"/><circle cx="29" cy="192" r="1.2" fill="none" stroke="#a9c0fb" stroke-width="0.6"/><circle cx="268" cy="101" r="2" fill="#4ab0f0" opacity="0.75"/><circle cx="268" cy="108" r="2" fill="#34b35a" opacity="0.75"/><circle cx="268" cy="115" r="2" fill="#b57cf0" opacity="0.75"/><circle cx="268" cy="122" r="2" fill="#4ab0f0" opacity="0.75"/><circle cx="268" cy="129" r="2" fill="#34b35a" opacity="0.75"/><circle cx="268" cy="136" r="2" fill="#5a8ff0" opacity="0.75"/><circle cx="268" cy="143" r="2" fill="#9a6cf0" opacity="0.75"/><circle cx="268" cy="150" r="2" fill="#5a7ff0" opacity="0.75"/><circle cx="268" cy="157" r="2" fill="#5a7ff0" opacity="0.75"/><rect x="59.6" y="235.6" width="178.2" height="29.0" rx="14.5" fill="#c6ee1f" /></g></svg>
<div class="a" style="left:1482px;top:205px;width:95px;height:22px;background:rgba(200,215,250,0.92);border-radius:0 0 6px 6px"></div>
<div class="t" style="left:1490px;top:210px;font-size:12.2px;color:#2c2d2e">Реклама • 16+</div>
<div class="t" style="left:1642px;top:237px;font-size:18.5px;font-weight:bold;color:#fff;letter-spacing:-0.3px">Битрикс24</div>
<svg class="a" style="left:1739px;top:237px" width="11" height="11" viewBox="0 0 11 11" fill="none" stroke="#fff" stroke-width="1.3"><circle cx="5.5" cy="5.5" r="4.6"/><path d="M5.5 2.8V5.7H7.8"/></svg>
<div class="t" style="left:1541px;top:449px;font-size:12.5px;font-weight:bold;color:#243d12">ПОЛУЧИТЬ БЕСПЛАТНО</div>
<div class="a" style="left:1468px;top:504px;width:297px;height:199px;background:#fff;border-radius:0 0 14px 14px"></div>
<div class="a" style="left:1482px;top:516px;width:270px;font-size:17.3px;font-weight:bold;line-height:21px;color:#000">Бесплатный планировщик<br>задач №1 для рабочих<br>процессов!</div>
<div class="a" style="left:1482px;top:592px;width:270px;font-size:16.2px;line-height:20.3px;color:#8a97a8">Работайте всей командой<br>в Битрикс24, рутинные задачи…</div>
<div class="a" style="left:1482px;top:650px;width:100px;height:38px;border-radius:7px;background:#eff0f3"></div>
<div class="t" style="left:1502px;top:662.5px;font-size:14.5px;color:#2c2d2e">bitrix24.ru</div>
<svg class="a" style="left:1468px;top:720px" width="297" height="287" viewBox="0 0 297 287">
<defs>
<clipPath id="cp3"><path d="M0 14 Q0 0 14 0 H283 Q297 0 297 14 V287 H0Z"/></clipPath>
<linearGradient id="wallTop" x1="0" y1="0" x2="1" y2="0"><stop offset="0" stop-color="#3e4542"/><stop offset="0.5" stop-color="#474d49"/><stop offset="1" stop-color="#3c403d"/></linearGradient>
<linearGradient id="wallMid" x1="0" y1="0" x2="1" y2="0"><stop offset="0" stop-color="#5c706d"/><stop offset="0.45" stop-color="#586b68"/><stop offset="0.72" stop-color="#4a5653"/><stop offset="1" stop-color="#5b6764"/></linearGradient>
<linearGradient id="floor" x1="0" y1="0" x2="1" y2="0.5"><stop offset="0" stop-color="#404543"/><stop offset="0.45" stop-color="#5a5f5d"/><stop offset="0.8" stop-color="#858b89"/><stop offset="1" stop-color="#aab0ae"/></linearGradient>
<linearGradient id="pillar" x1="0" y1="0" x2="1" y2="0"><stop offset="0" stop-color="#56625f"/><stop offset="0.3" stop-color="#8e9c98"/><stop offset="1" stop-color="#a6b2ae"/></linearGradient>
<filter id="nz"><feTurbulence type="fractalNoise" baseFrequency="0.8" numOctaves="2" seed="5"/><feColorMatrix values="0 0 0 0 0  0 0 0 0 0  0 0 0 0 0  0 0 0 0.5 0"/><feComposite in2="SourceGraphic" operator="in"/></filter>
</defs>
<g clip-path="url(#cp3)">
<rect width="297" height="287" fill="#4a504d"/>
<rect x="0" y="0" width="297" height="66" fill="url(#wallTop)"/>
<rect x="0" y="64" width="230" height="126" fill="url(#wallMid)"/>
<path d="M130 64 Q150 90 140 120 Q160 150 150 190 L215 190 L215 64Z" fill="#3a4441" opacity="0.5"/>
<path d="M160 64 Q175 100 165 130 L185 160 L175 190 L215 190 L215 64Z" fill="#323a38" opacity="0.4"/>
<rect x="26" y="31" width="54" height="32" fill="#36393a"/>
<rect x="31" y="35" width="45" height="25" fill="#2d2a28"/>
<path d="M0 188 L230 188 L297 182 V287 H0Z" fill="url(#floor)"/>
<path d="M150 287 Q220 225 297 200 V287Z" fill="#b9bebc" opacity="0.5"/>
<rect x="0" y="184" width="205" height="10" fill="#2e3230" opacity="0.35"/>
<rect x="212" y="14" width="46" height="204" fill="url(#pillar)"/>
<rect x="222" y="18" width="36" height="46" fill="#b3af9f"/>
<rect x="205" y="210" width="50" height="14" fill="#5a4842"/>
<rect x="222" y="9" width="75" height="11" fill="#c9c5b7"/>
<rect x="258" y="20" width="39" height="205" fill="#909c98"/>
<rect x="261" y="22" width="14" height="92" fill="#2f3331"/>
<path d="M266 22V114M261 50H275M261 80H275" stroke="#9a9a90" stroke-width="1"/>
<rect x="275" y="20" width="22" height="205" fill="#aab5b1"/>
<rect x="258" y="172" width="39" height="10" fill="#6a5550"/>
<path d="M255 225 L297 215 V287 H240Z" fill="#c2c7c5" opacity="0.5"/>
<rect width="297" height="287" fill="#fff" filter="url(#nz)" opacity="0.45"/>
<g fill="none" stroke="#cfd2cf" stroke-width="1.6">
<path d="M40 195 V113 Q40 110 43 110 H96 Q99 110 99 113 V160"/>
<path d="M52 111V162M62 111V162M72 111V162M82 111V162M90 111V162"/>
</g>
<path d="M52 157 Q90 148 180 165 L185 182 Q120 176 55 170Z" fill="#bfc0b9"/>
<path d="M50 168 L180 180 L182 186 L48 172Z" fill="#6d4d42"/>
<g fill="none" stroke="#dadcd9" stroke-width="1.8">
<path d="M129 234 V145 Q129 140 134 140 H191 Q196 140 196 145 V222"/>
<path d="M139 141V198M149 141V198M160 141V198M171 141V198M182 141V198"/>
<path d="M129 198 H196"/>
</g>
</g></svg>
<div class="a" style="left:1482px;top:720px;width:95px;height:22px;background:rgba(226,226,226,0.92);border-radius:0 0 6px 6px"></div>
<div class="t" style="left:1490px;top:725px;font-size:12.2px;color:#2c2d2e">Реклама • 16+</div>


<!-- popup -->
<div class="a" style="left:727px;top:934px;width:500px;height:67px;background:#fff;border-radius:16px;box-shadow:0 2px 10px rgba(0,0,0,0.12)"></div>
<div class="a" style="left:742px;top:949px;width:37px;height:37px;border-radius:9px;background:#00b3fe"></div>
<svg class="a" style="left:742px;top:949px" width="37" height="37" viewBox="0 0 37 37" fill="none" stroke="#000" stroke-width="2.5" stroke-linejoin="round"><g transform="translate(19.8 15.8) rotate(45)"><rect x="-5.6" y="-4" width="11.2" height="8"/><path d="M-7.6 -6.2V6.2M7.6 -6.2V6.2" stroke-width="2.7"/><rect x="-2.4" y="4" width="4.8" height="14.5" rx="2.4"/></g><path d="M18.7 29.3H32.9" stroke-width="2.7"/></svg>
<div class="t" style="left:791px;top:957px;font-size:18.4px;color:#2c2d2e">Закон и порядок</div>
<svg class="a" style="left:942px;top:961px" width="9" height="14" viewBox="0 0 9 14" fill="none" stroke="#9a9da3" stroke-width="1.8"><path d="M1.5 1.5L7 7L1.5 12.5"/></svg>
<div class="a" style="left:1105px;top:949px;width:107px;height:37px;border-radius:10px;background:#f0f1f3"></div>
<div class="t" style="left:1120px;top:958px;font-size:18.1px;color:#2c2d2e">Вступить</div>


<!-- scrollbar -->
<div class="a" style="left:1905px;top:105px;width:15px;height:927px;background:#fafafa"></div>
<svg class="a" style="left:1908px;top:108px" width="9" height="7" viewBox="0 0 9 7"><path d="M4.5 0.5L8.5 6.5H0.5Z" fill="#8a8a8a"/></svg>
<div class="a" style="left:1908px;top:273px;width:9px;height:178px;border-radius:5px;background:#8a8a8a"></div>
<svg class="a" style="left:1908px;top:1021px" width="9" height="7" viewBox="0 0 9 7"><path d="M4.5 6.5L8.5 0.5H0.5Z" fill="#8a8a8a"/></svg>

<!-- ========== TASKBAR ========== -->
<div class="a" style="left:0;top:1032px;width:1920px;height:48px;background:linear-gradient(90deg,#cddce6 0%,#d6e1e2 2.5%,#e5eacd 5%,#eeeacb 8%,#efe5d2 13%,#f0dfd3 16%,#f0ded3 54.5%,#ece6b8 56.5%,#e9e8ad 58%,#dddcca 60%,#e9dfd0 62%,#ece3c2 66%,#eae8a9 68.5%,#eee2c6 71%,#f1dfd3 75%,#f1ded4 100%);border-top:1px solid #c9c4bf"></div>
<!-- start -->
<svg class="a" style="left:21px;top:1045px" width="23" height="23" viewBox="0 0 23 23"><defs><linearGradient id="wg" x1="0" y1="0" x2="1" y2="1"><stop offset="0" stop-color="#3ccbf4"/><stop offset="1" stop-color="#0a6fd6"/></linearGradient></defs><rect x="0" y="0" width="11" height="11" rx="1" fill="url(#wg)"/><rect x="12" y="0" width="11" height="11" rx="1" fill="url(#wg)"/><rect x="0" y="12" width="11" height="11" rx="1" fill="url(#wg)"/><rect x="12" y="12" width="11" height="11" rx="1" fill="url(#wg)"/></svg>
<div class="a" style="left:58px;top:1041px;width:218px;height:30px;border-radius:15px;background:rgba(255,255,255,0.72);border:1px solid rgba(0,0,0,0.07)"></div>
<svg class="a" style="left:69px;top:1049px" width="15" height="15" viewBox="0 0 15 15" fill="none" stroke="#222" stroke-width="1.6"><circle cx="6.3" cy="6.3" r="5.2"/><path d="M10 10L14 14"/></svg>
<div class="t" style="left:94px;top:1049px;font-size:14px;color:#5a5a5a">Поиск</div>
<!-- task view -->
<div class="a" style="left:295px;top:1045px;width:18px;height:16px;border-radius:2px;background:linear-gradient(135deg,#fff,#dcdcdc);box-shadow:0 0 1px rgba(0,0,0,0.3)"></div>
<div class="a" style="left:289px;top:1051px;width:18px;height:16px;border-radius:2px;background:linear-gradient(135deg,#3a3a3a,#111)"></div>
<div class="a" style="left:295px;top:1051px;width:12px;height:10px;background:linear-gradient(135deg,#c8c8c8,#9a9a9a)"></div>
<!-- edge -->
<svg class="a" style="left:333px;top:1044px" width="24" height="24" viewBox="0 0 24 24"><defs><linearGradient id="eg1" x1="0" y1="0" x2="1" y2="1"><stop offset="0" stop-color="#35c1f1"/><stop offset="0.6" stop-color="#1b8ee0"/><stop offset="1" stop-color="#0c59a4"/></linearGradient><linearGradient id="eg2" x1="0" y1="0" x2="1" y2="0"><stop offset="0" stop-color="#2fa8e8"/><stop offset="1" stop-color="#66eb6e"/></linearGradient></defs><circle cx="12" cy="12" r="11.5" fill="url(#eg1)"/><path d="M5 13 Q6 5 13 4.5 Q21 4.5 23 11 Q23.5 15 20 16 Q16 17 13.5 15.5 Q11.5 14 12.5 12 Q10 11 8 13.5 Q6 16.5 9 20.5 Q5 19 5 13Z" fill="url(#eg2)"/><path d="M9 20.5 Q12 23.5 16.5 23 Q21 22 23 18.5 Q19 21 15.5 19.5 Q12 18 12.5 12 Q8 13 9 20.5Z" fill="#0c4f9a"/></svg>
<!-- explorer -->
<svg class="a" style="left:377px;top:1045px" width="24" height="22" viewBox="0 0 24 22"><path d="M0 2 Q0 0.5 1.5 0.5 H8 L10 2.5 H23 Q24 2.5 24 3.5 V21.5 H0Z" fill="#e9a800"/><path d="M0 4.5 H24 V21.5 H0Z" fill="#fcd04f"/><rect x="4" y="14" width="16" height="7.5" rx="1.5" fill="#1f8ad8"/><rect x="7" y="16.5" width="10" height="1" fill="#6ab8f0"/></svg>
<!-- store -->
<svg class="a" style="left:421px;top:1044px" width="23" height="24" viewBox="0 0 23 24"><path d="M6 5 V2 Q6 0.8 7.2 0.8 H15.8 Q17 0.8 17 2 V5" fill="none" stroke="#35b6f0" stroke-width="1.6"/><path d="M0 5 H23 V21 Q23 23.5 20.5 23.5 H2.5 Q0 23.5 0 21Z" fill="#1a4f96"/><rect x="7" y="9" width="4" height="4" fill="#f25022"/><rect x="12" y="9" width="4" height="4" fill="#7fba00"/><rect x="7" y="14" width="4" height="4" fill="#00a4ef"/><rect x="12" y="14" width="4" height="4" fill="#ffb900"/></svg>
<!-- chrome -->
<svg class="a" style="left:465px;top:1044px" width="24" height="24" viewBox="0 0 24 24"><circle cx="12" cy="12" r="11.8" fill="#f3c21a"/><path d="M12 0.2 A11.8 11.8 0 0 1 22.2 6 H12Z M12 0.2 A11.8 11.8 0 0 0 1.8 6 L6.9 14.9 L12 6Z" fill="#dc3b2d"/><path d="M1.8 6 A11.8 11.8 0 0 0 12 23.8 L17.1 14.9 H6.9Z" fill="#2a9c48"/><path d="M12 6 H22.2 L17.1 14.9Z" fill="#f3c21a"/><circle cx="12" cy="12" r="5.4" fill="#fff"/><circle cx="12" cy="12" r="4.3" fill="#3f82f0"/></svg>
<!-- yandex -->
<div class="a" style="left:536px;top:1038px;width:4px;height:36px;border-radius:0 4px 4px 0;background:rgba(255,255,255,0.45)"></div>
<div class="a" style="left:502px;top:1037px;width:34px;height:38px;border-radius:4px;background:rgba(255,255,255,0.55)"></div>
<div class="a" style="left:509px;top:1044px;width:23px;height:24px;border-radius:12px;background:#fff"></div>
<svg class="a" style="left:511px;top:1047px" width="19" height="19" viewBox="0 0 19 19" fill="none" stroke-width="2.6" stroke-linecap="round"><path d="M3 3 L9.5 10" stroke="#ff5a1f"/><path d="M16 3 L9.5 10" stroke="#ff4fa0"/><path d="M9.5 10 V17" stroke="#ff3a1f"/></svg>
<div class="a" style="left:513px;top:1073px;width:16px;height:3px;border-radius:2px;background:#0067c0"></div>
<!-- tray -->
<svg class="a" style="left:1552px;top:1040px" width="30" height="26" viewBox="0 0 30 26"><defs><linearGradient id="sg" x1="0" y1="0" x2="1" y2="1"><stop offset="0" stop-color="#f8b927"/><stop offset="1" stop-color="#f26a10"/></linearGradient></defs><circle cx="11.5" cy="14.8" r="10.8" fill="url(#sg)"/><path d="M10 22 Q9 18 13 17.5 Q14.5 15 17.5 15.5 Q21 16 21.5 19 Q23.5 19.5 23 21.5 Q22.5 22.5 21 22.5 H11 Q10 22.5 10 22Z" fill="#a9d3f5"/></svg>
<div class="a" style="left:1562px;top:1038px;width:16px;height:16px;border-radius:8px;background:#c42b1c"></div>
<div class="t" style="left:1567px;top:1040px;font-size:11.5px;color:#fff">1</div>
<div class="t" style="left:1583px;top:1042px;font-size:11.3px;color:#1a1a1a">8°C</div>
<div class="t" style="left:1583px;top:1058px;font-size:11.8px;color:#5a5a5a;letter-spacing:0.2px">В осн. солнечно</div>
<svg class="a" style="left:1714px;top:1052px" width="13" height="8" viewBox="0 0 13 8" fill="none" stroke="#1a1a1a" stroke-width="1.2"><path d="M1 7L6.5 1.5L12 7"/></svg>
<div class="t" style="left:1748px;top:1050px;font-size:11.2px;color:#1a1a1a">РУС</div>
<svg class="a" style="left:1787px;top:1047px" width="18" height="17" viewBox="0 0 18 17" fill="none" stroke="#1a1a1a" stroke-width="1.1"><path d="M11 2.5 H1.5 Q0.6 2.5 0.6 3.4 V11.6 Q0.6 12.5 1.5 12.5 H14 Q14.9 12.5 14.9 11.6 V9"/><path d="M5 16.3 H11 M8 12.5 V16.3"/><rect x="13.2" y="0.6" width="3.6" height="5.5" rx="1.8"/><path d="M15 6.1 V16.3"/></svg>
<svg class="a" style="left:1811px;top:1048px" width="18" height="15" viewBox="0 0 18 15" fill="none" stroke="#1a1a1a" stroke-width="1.1" stroke-linejoin="round"><path d="M0.8 5 H3.5 L7.5 1.3 V13.7 L3.5 10 H0.8Z"/><path d="M10 5 Q11 7.5 10 10"/><path d="M12.3 3.3 Q14.2 7.5 12.3 11.7"/><path d="M14.6 1.5 Q17.6 7.5 14.6 13.5"/></svg>
<div class="t" style="left:1800px;width:101px;text-align:right;top:1042px;font-size:11.5px;color:#1a1a1a">13:37</div>
<div class="t" style="left:1800px;width:101px;text-align:right;top:1058px;font-size:11.5px;color:#1a1a1a">08.03.2026</div>
</body></html>
